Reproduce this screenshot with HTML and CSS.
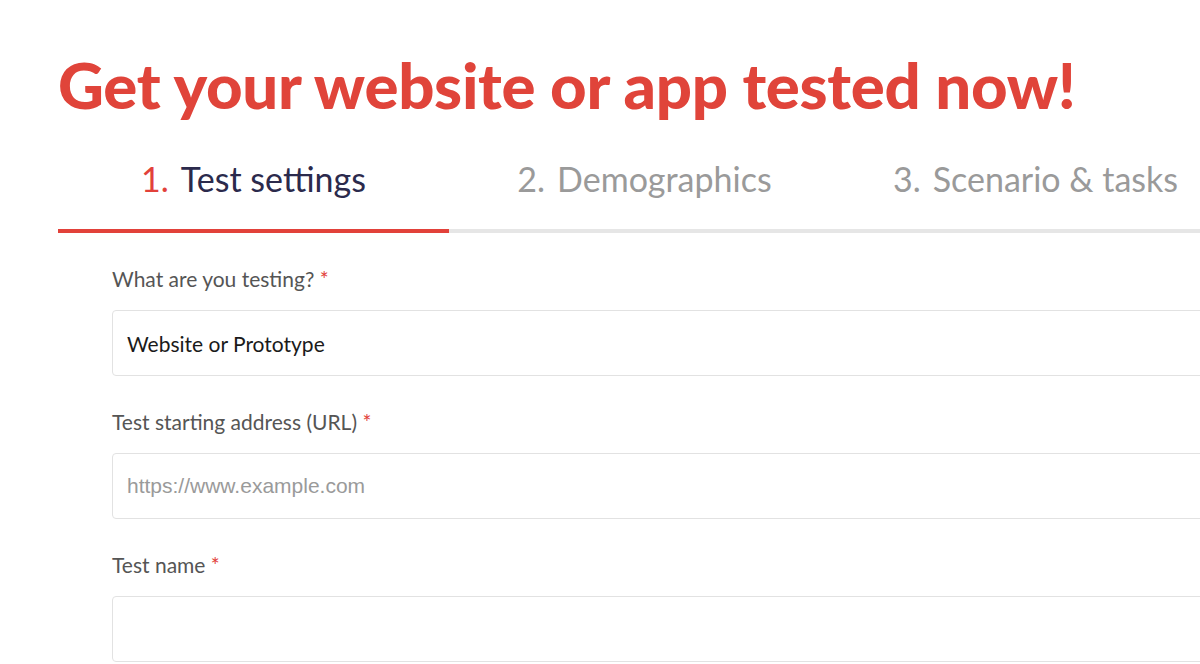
FILE: index.html
```html
<!DOCTYPE html>
<html>
<head>
    <meta charset="utf-8">
    <title>Get your website or app tested now!</title>
    <link rel="stylesheet" href="styles.css">
</head>
<body>
    <div class="page">
        <h1>Get your website or app tested now!</h1>

        <!-- Step tabs -->
        <div class="steps">
            <div class="step active"><span class="num">1.</span>Test settings</div>
            <div class="step"><span class="num">2.</span>Demographics</div>
            <div class="step"><span class="num">3.</span>Scenario &amp; tasks</div>
        </div>

        <form class="form">
            <div class="field">
                <label>What are you testing? <span class="req">*</span></label>
                <div class="input value">Website or Prototype</div>
            </div>
            <div class="field">
                <label>Test starting address (URL) <span class="req">*</span></label>
                <input class="input" type="text" placeholder="https://www.example.com">
            </div>
            <div class="field">
                <label>Test name <span class="req">*</span></label>
                <input class="input" type="text">
            </div>
        </form>
    </div>
</body>
</html>
```

FILE: styles.css
```css
html, body {
    margin: 0;
    overflow: hidden;
}

body {
    background: #fff;
    font-family: 'Lato', sans-serif;
    width: 1200px;
    height: 664px;
}

.page {
    width: 1173px;
    margin-left: 58px;
}

h1 {
    margin: 0;
    padding-top: 46px;
    font-size: 63.5px;
    line-height: 78px;
    font-weight: 900;
    color: #e0443a;
    letter-spacing: -0.3px;
    white-space: nowrap;
}

.steps {
    display: flex;
    margin-top: 24px;
    border-bottom: 4px solid #e6e6e6;
}

.step {
    flex: 1;
    text-align: center;
    font-size: 34px;
    color: #9a9a9a;
    padding: 10px 0 30px;
    margin-bottom: -4px;
    border-bottom: 4px solid transparent;
    white-space: nowrap;
}

.step .num {
    margin-right: 12px;
}

.step.active {
    color: #2b2a4c;
    border-bottom-color: #e2413a;
}

.step.active .num {
    color: #e2413a;
}

.form {
    padding: 33px 0 0 54px;
    width: 1200px;
    display: flex;
    flex-direction: column;
    gap: 33px;
}

.field label {
    display: block;
    font-size: 21px;
    line-height: 26px;
    color: #555;
    margin-bottom: 18px;
}

.req {
    color: #e2413a;
}

.input {
    box-sizing: border-box;
    display: block;
    width: 100%;
    height: 66px;
    padding: 0 14px;
    border: 1px solid #e2e2e2;
    border-radius: 4px;
    background: #fff;
    font-family: 'Liberation Sans', sans-serif;
    font-size: 21px;
    color: #222;
    outline: none;
}

.input.value {
    display: flex;
    align-items: center;
    font-family: 'Lato', sans-serif;
    color: #1a1a1a;
}

.input::placeholder {
    color: #9a9a9a;
}
```
